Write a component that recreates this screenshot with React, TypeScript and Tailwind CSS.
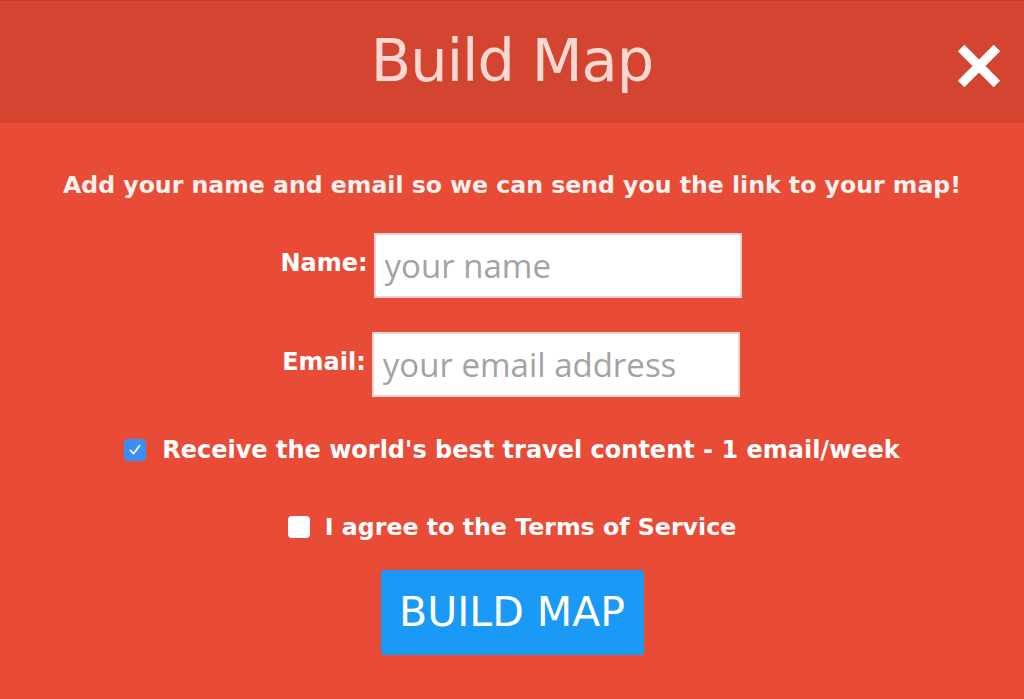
import { useState } from 'react';

const heading = { fontFamily: '"DejaVu Sans", "Liberation Sans", sans-serif' };
const field = { fontFamily: '"Open Sans", "Noto Sans", sans-serif' };

function FieldRow({ label, placeholder, type }: { label: string; placeholder: string; type: string }) {
  return (
    <div className="flex items-center justify-center gap-[6px] -ml-[2px]">
      <label className="text-[24px] leading-[30px] font-bold text-white -mt-[6px]" style={heading}>
        {label}
      </label>
      <input
        type={type}
        placeholder={placeholder}
        className="w-[368px] h-[65px] border-2 border-[#e6d6d2] bg-white px-[9px] text-[33px] text-gray-700 placeholder:text-[#a3a3a3] outline-none"
        style={field}
      />
    </div>
  );
}

export default function App() {
  const [newsletter, setNewsletter] = useState(true);
  const [terms, setTerms] = useState(false);

  return (
    <div className="w-[1024px] h-[699px] flex flex-col bg-[#e84b36] overflow-hidden" style={heading}>
      {/* Header */}
      <div className="relative h-[123px] flex items-center justify-center bg-[#d44531] border-t border-[#c23c2a]">
        <h1 className="text-[59px] font-normal text-[#fcd8d2] tracking-[-1px] -mt-[2px]">Build Map</h1>
        <button className="absolute right-[22px] top-[42px] w-[46px] h-[46px] flex items-center justify-center">
          <svg viewBox="0 0 24 24" className="w-[44px] h-[44px]" fill="none" stroke="white" strokeWidth={5} strokeLinecap="square">
            <path d="M4 4L20 20M20 4L4 20" />
          </svg>
        </button>
      </div>

      {/* Form */}
      <div className="flex flex-col items-center pt-[47px]">
        <p className="text-[23.6px] leading-[30px] font-bold text-[#fdf1ee]">
          Add your name and email so we can send you the link to your map!
        </p>

        <div className="mt-[33px] flex flex-col gap-[34px]">
          <FieldRow label="Name:" placeholder="your name" type="text" />
          <FieldRow label="Email:" placeholder="your email address" type="email" />
        </div>

        <label className="mt-[38px] flex items-center gap-[16px] cursor-pointer">
          <span
            onClick={() => setNewsletter(!newsletter)}
            className={`w-[22px] h-[22px] rounded-[4px] flex items-center justify-center ${newsletter ? 'bg-[#3b8ef5]' : 'bg-white'}`}
          >
            {newsletter && (
              <svg viewBox="0 0 16 16" className="w-[16px] h-[16px]" fill="none" stroke="white" strokeWidth={1.8} strokeLinecap="round" strokeLinejoin="round">
                <path d="M3.5 8.5l3 3.2 6-8" />
              </svg>
            )}
          </span>
          <span className="text-[24px] leading-[30px] font-bold text-white">Receive the world's best travel content - 1 email/week</span>
        </label>

        <label className="mt-[47px] flex items-center gap-[15px] cursor-pointer">
          <span
            onClick={() => setTerms(!terms)}
            className={`w-[22px] h-[22px] rounded-[4px] flex items-center justify-center ${terms ? 'bg-[#3b8ef5]' : 'bg-white'}`}
          />
          <span className="text-[23.7px] leading-[30px] font-bold text-white">I agree to the Terms of Service</span>
        </label>

        <button className="mt-[28px] w-[263px] h-[85px] rounded-[3px] bg-[#1a9af6] text-[41px] text-white">
          BUILD MAP
        </button>
      </div>
    </div>
  );
}
